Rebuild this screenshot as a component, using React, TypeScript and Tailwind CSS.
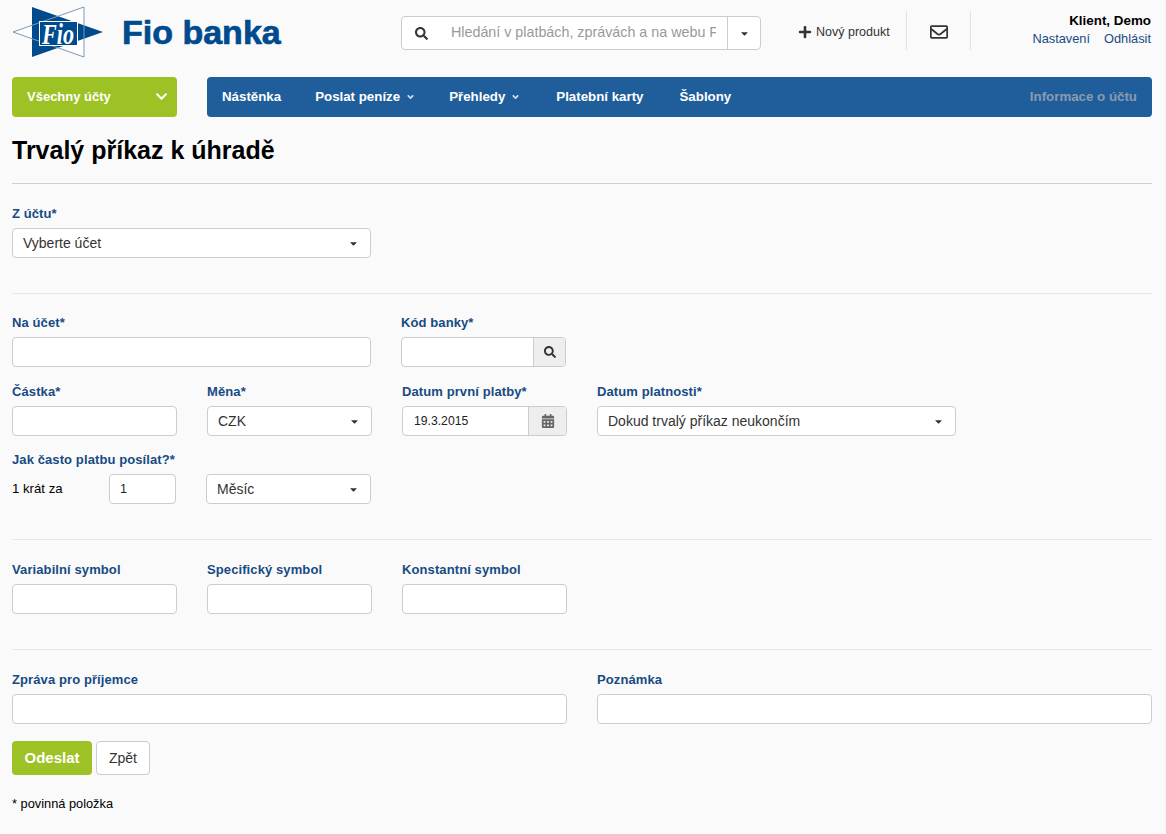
import { FaAngleDown, FaCalendarAlt, FaCaretDown, FaChevronDown, FaPlus, FaRegEnvelope, FaSearch } from 'react-icons/fa';

const Logo = () => (
  <svg width="92" height="52" viewBox="0 0 92 52" className="block">
    <polygon points="1,26 72,1 72,51" fill="#fff" />
    <polygon points="20,1 91,26 20,51" fill="#004b8d" />
    <polygon points="1,26 72,1 72,51" fill="none" stroke="#7f97b8" strokeWidth="1" />
    <rect x="27.5" y="15.5" width="38" height="24" fill="#004b8d" stroke="#fff" strokeWidth="1" />
    <text
      transform="translate(46 38) scale(0.92 1.2)"
      textAnchor="middle"
      fill="#fff"
      fontFamily="'Liberation Serif', serif"
      fontStyle="italic"
      fontWeight="700"
      fontSize="24"
    >
      Fio
    </text>
  </svg>
);

function Label({ children, className = '' }: { children: React.ReactNode; className?: string }) {
  return <label className={`block h-[15px] text-[13px] leading-[15px] font-bold tracking-[0.1px] text-[#174a84] ${className}`}>{children}</label>;
}

function Input({ value, className = 'w-full' }: { value?: string; className?: string }) {
  return (
    <div className={`flex h-[30px] items-center rounded-[4px] border border-[#ccc] bg-white px-2.5 text-[12.5px] text-[#222] ${className}`}>
      {value}
    </div>
  );
}

function Select({ value, className = 'w-full' }: { value: string; className?: string }) {
  return (
    <div className={`flex h-[30px] items-center justify-between rounded-[4px] border border-[#ccc] bg-white pr-[11px] pl-2.5 text-[14px] text-[#333] ${className}`}>
      <span>{value}</span>
      <FaCaretDown className="h-[11px] w-[11px] text-[#333]" />
    </div>
  );
}

function Field({ label, children, className = '' }: { label: string; children: React.ReactNode; className?: string }) {
  return (
    <div className={className}>
      <Label className="mb-[7px]">{label}</Label>
      {children}
    </div>
  );
}

const Divider = ({ className = '' }: { className?: string }) => <div className={`h-px bg-[#e8e8e8] ${className}`} />;

function NavItem({ label, caret, className = '' }: { label: string; caret?: boolean; className?: string }) {
  return (
    <span className={`flex items-center gap-[6px] whitespace-nowrap ${className}`}>
      {label}
      {caret && <FaAngleDown className="h-[10px] w-[9px] font-normal text-[#d5e0ec]" />}
    </span>
  );
}

export default function App() {
  return (
    <div className="min-h-[834px] bg-[#fafafa] pr-[14px] pl-3 font-['Liberation_Sans',Arial,sans-serif] text-[14px] text-black">
      <header className="flex h-[77px] items-start">
        <div className="flex w-[389px] items-center pt-[6px]">
          <Logo />
          <span className="ml-[18px] text-[34px] leading-[52px] font-bold text-[#004b8d] [-webkit-text-stroke:0.7px_#004b8d]">Fio banka</span>
        </div>
        <div className="mt-4 flex h-[34px] w-[360px] items-center rounded-[4px] border border-[#ccc] bg-white text-[#333]">
          <div className="flex w-[39px] justify-center">
            <FaSearch className="h-[13px] w-[13px]" />
          </div>
          <input
            readOnly
            placeholder="Hledání v platbách, zprávách a na webu Fio"
            className="mr-[11px] ml-[10px] w-[265px] bg-transparent text-[14.3px] outline-none placeholder:text-[#999]"
          />
          <div className="flex h-full flex-1 items-center justify-center border-l border-[#ccc]">
            <FaCaretDown className="h-[11px] w-[11px]" />
          </div>
        </div>
        <div className="mt-[11px] ml-[37px] flex h-[39px] w-[109px] items-center gap-[4px] border-r border-[#e3e3e3] pt-[3px] text-[12.5px] whitespace-nowrap text-[#333]">
          <FaPlus className="h-[14px] w-[14px]" />
          Nový produkt
        </div>
        <div className="mt-[11px] flex h-[39px] w-[64px] items-center justify-center border-r border-[#e3e3e3] pt-[3px] text-[#333]">
          <FaRegEnvelope className="h-[18px] w-[18px]" />
        </div>
        <div className="mt-[13px] flex-1 pr-px text-right text-[12.8px] leading-[16px]">
          <div className="text-[13.4px] font-bold">Klient, Demo</div>
          <div className="mt-[2px] flex justify-end gap-[14px] text-[#174a84]">
            <span>Nastavení</span>
            <span>Odhlásit</span>
          </div>
        </div>
      </header>

      <nav className="flex h-10 gap-[30px] text-[13.3px] font-bold">
        <div className="flex w-[165px] items-center justify-between rounded-[4px] bg-[#9dc225] pr-[9px] pb-px pl-[15px] text-[13px] text-white">
          Všechny účty
          <FaChevronDown className="h-[13px] w-[13px]" />
        </div>
        <div className="flex flex-1 items-center justify-between rounded-[4px] bg-[#205e9b] px-[15px] pb-px text-white">
          <div className="flex items-center gap-[34px]">
            <NavItem label="Nástěnka" />
            <NavItem label="Poslat peníze" caret />
            <NavItem label="Přehledy" caret />
            <NavItem label="Platební karty" className="ml-[2px]" />
            <NavItem label="Šablony" className="ml-[2px]" />
          </div>
          <span className="text-[#8a9bb0]">Informace o účtu</span>
        </div>
      </nav>

      <h1 className="mt-[18px] text-[25px] leading-[30px] font-bold">Trvalý příkaz k úhradě</h1>
      <div className="mt-[18px] h-px bg-[#cfcfcf]" />

      <Field label="Z účtu*" className="mt-[22px]">
        <Select value="Vyberte účet" className="w-[359px]" />
      </Field>

      <Divider className="mt-[35px]" />

      <div className="mt-[21px] flex">
        <Field label="Na účet*" className="w-[359px]">
          <Input />
        </Field>
        <Field label="Kód banky*" className="ml-[30px] w-[165px]">
          <div className="flex h-[30px] rounded-[4px] border border-[#ccc] bg-white">
            <div className="flex-1" />
            <div className="flex w-[32px] items-center justify-center rounded-r-[4px] border-l border-[#ccc] bg-[#eee] text-[#333]">
              <FaSearch className="h-[12px] w-[12px]" />
            </div>
          </div>
        </Field>
      </div>

      <div className="mt-[17px] flex items-start">
        <Field label="Částka*" className="w-[165px]">
          <Input />
        </Field>
        <Field label="Měna*" className="ml-[30px] w-[165px]">
          <Select value="CZK" />
        </Field>
        <Field label="Datum první platby*" className="ml-[30px] w-[165px]">
          <div className="flex h-[30px] rounded-[4px] border border-[#ccc] bg-white">
            <div className="flex flex-1 items-center pl-[11px] text-[12.2px] text-[#222]">19.3.2015</div>
            <div className="flex w-[38px] items-center justify-center rounded-r-[4px] border-l border-[#ccc] bg-[#eee] text-[#666]">
              <FaCalendarAlt className="h-[14px] w-[14px]" />
            </div>
          </div>
        </Field>
        <Field label="Datum platnosti*" className="ml-[30px] w-[359px]">
          <Select value="Dokud trvalý příkaz neukončím" />
        </Field>
      </div>

      <div className="mt-[16px]">
        <Label className="mb-[7px]">Jak často platbu posílat?*</Label>
        <div className="flex items-center">
          <span className="w-[97px] text-[13.2px]">1 krát za</span>
          <Input value="1" className="w-[67px]" />
          <Select value="Měsíc" className="ml-[30px] w-[165px]" />
        </div>
      </div>

      <Divider className="mt-[35px]" />

      <div className="mt-[22px] flex gap-[30px]">
        <Field label="Variabilní symbol" className="w-[165px]">
          <Input />
        </Field>
        <Field label="Specifický symbol" className="w-[165px]">
          <Input />
        </Field>
        <Field label="Konstantní symbol" className="w-[165px]">
          <Input />
        </Field>
      </div>

      <Divider className="mt-[35px]" />

      <div className="mt-[22px] flex gap-[30px]">
        <Field label="Zpráva pro příjemce" className="w-[555px]">
          <Input />
        </Field>
        <Field label="Poznámka" className="w-[555px]">
          <Input />
        </Field>
      </div>

      <div className="mt-[17px] flex gap-[4px]">
        <button className="h-[34px] w-[80px] rounded-[4px] bg-[#9dc225] text-[15px] font-bold text-white">Odeslat</button>
        <button className="h-[34px] w-[54px] rounded-[4px] border border-[#ccc] bg-white text-[14px] text-[#333]">Zpět</button>
      </div>

      <p className="mt-[21px] text-[12.8px] leading-[16px]">* povinná položka</p>
    </div>
  );
}
